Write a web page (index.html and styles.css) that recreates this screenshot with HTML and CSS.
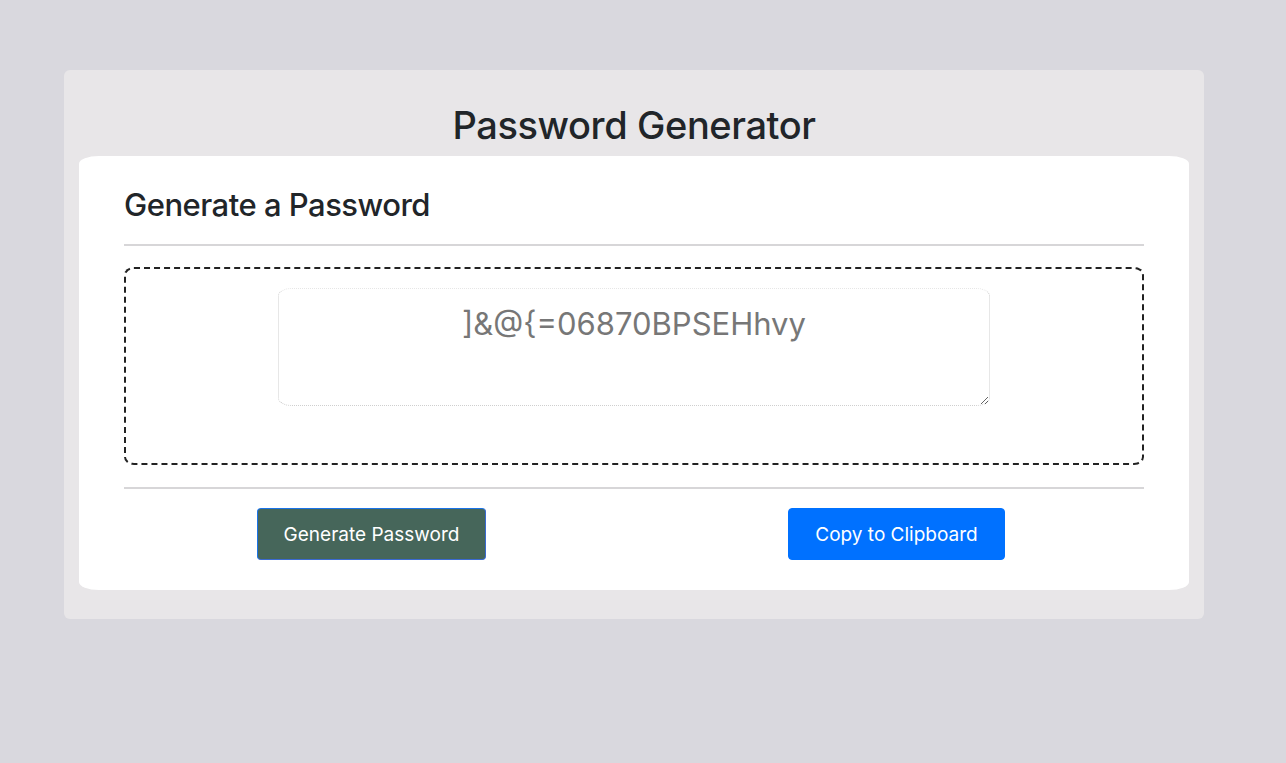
FILE: index.html
```html
<!DOCTYPE html>
<html lang="en">
<head>
<meta charset="UTF-8">
<title>Password Generator</title>
<link rel="stylesheet" href="styles.css">
</head>
<body>
  <div class="wrapper">
    <header class="header">
      <h1>Password Generator</h1>
    </header>
    <div class="card">
      <div class="card-header">
        <h2>Generate a Password</h2>
      </div>
      <div class="card-body">
        <textarea readonly class="password" aria-label="Generated Password">]&amp;@{=06870BPSEHhvy</textarea>
      </div>
      <div class="card-footer">
        <button class="btn btn-generate">Generate Password</button>
        <button class="btn btn-copy">Copy to Clipboard</button>
      </div>
    </div>
  </div>
</body>
</html>
```

FILE: styles.css
```css
* {
  box-sizing: border-box;
}

html, body {
  margin: 0;
  padding: 0;
  height: 100%;
}

body {
  background: #d9d8de;
  font-family: Inter, "Liberation Sans", sans-serif;
  color: #212529;
  padding: 70px 0 0 64px;
}

.wrapper {
  width: 1140px;
  background: #e8e6e8;
  border-radius: 6px;
  padding: 0 15px 29px;
}

.header {
  text-align: center;
  padding: 31px 0 7px;
}

.header h1 {
  margin: 0;
  font-size: 38px;
  letter-spacing: -0.4px;
  font-weight: 500;
  line-height: 48px;
}

.card {
  background: #fff;
  border-radius: 20px / 8px;
  padding: 30px 45px 30px;
}

.card-header {
  padding-bottom: 20px;
  border-bottom: 2px solid #d7d6d8;
}

.card-header h2 {
  margin: 0;
  font-size: 31px;
  letter-spacing: -0.5px;
  font-weight: 500;
  line-height: 38px;
}

.card-body {
  margin: 21px 0 22px;
  height: 198px;
  border: 2px dashed #222;
  border-radius: 10px / 8px;
  padding-top: 19px;
  display: flex;
  justify-content: center;
  align-items: flex-start;
}

.password {
  width: 712px;
  height: 118px;
  border: 1px dotted #cfcfcf;
  border-top-color: #e6e6e6;
  border-radius: 14px / 8px;
  font-family: Inter, "Liberation Sans", sans-serif;
  font-size: 31px;
  color: #777;
  text-align: center;
  padding: 17px 10px;
  line-height: 36px;
  resize: vertical;
  background: #fff;
  outline: none;
  margin: 0;
}

.card-footer {
  border-top: 2px solid #d7d6d8;
  padding: 19px 0 0 133px;
  display: flex;
  align-items: center;
  gap: 302px;
}

.btn {
  height: 52px;
  font-family: Inter, "Liberation Sans", sans-serif;
  font-size: 19px;
  color: #fff;
  border-radius: 4px;
  cursor: pointer;
  padding: 0;
}

.btn-generate {
  background: #46665a;
  border: 1px solid #1a73e8;
  border-right-color: #3a6ad0;
  border-bottom-color: #3a6ad0;
  width: 229px;
}

.btn-copy {
  background: #0071ff;
  border: 1px solid #0071ff;
  width: 217px;
}
```
